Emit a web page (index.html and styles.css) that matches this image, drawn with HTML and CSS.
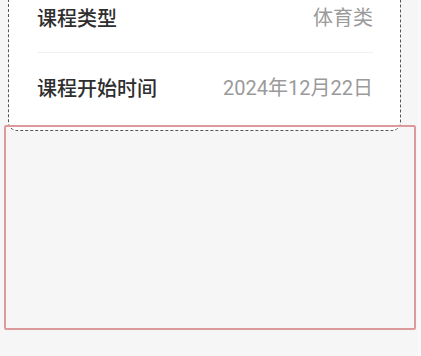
FILE: index.html
```html
<!DOCTYPE html>
<html lang="zh-CN">
<head>
<meta charset="utf-8">
<link rel="stylesheet" href="styles.css">
</head>
<body>
<div class="page">
  <div class="card">
    <div class="row">
      <span class="label">课程类型</span>
      <span class="value">体育类</span>
    </div>
    <div class="row">
      <span class="label">课程开始时间</span>
      <span class="value">2024年12月22日</span>
    </div>
  </div>
  <div class="empty-area"></div>
</div>
</body>
</html>
```
FILE: styles.css
```css
html, body {
  margin: 0;
  padding: 0;
  background: #fafafa;
  font-family: "Noto Sans CJK SC", "Noto Sans", sans-serif;
}
.page {
  width: 418px;
  height: 356px;
  overflow: hidden;
  background: #f6f6f6;
}
.card {
  margin: -18px 0 0 8px;
  width: 393px;
  box-sizing: border-box;
  background: #fff;
  border: 1px dashed #555;
  border-radius: 0 0 9px 9px;
  padding: 0 27px 8px 28px;
}
.row {
  height: 69px;
  display: flex;
  align-items: center;
  justify-content: space-between;
  font-size: 20px;
  line-height: 24px;
}
.row + .row {
  border-top: 1px solid #f1f1f1;
}
.label {
  color: #2e2e2e;
  font-weight: 500;
}
.value {
  color: #9a9a9a;
  font-family: "Roboto", "Noto Sans CJK SC", sans-serif;
}
.empty-area {
  margin: -6px 0 0 4px;
  width: 412px;
  height: 205px;
  box-sizing: border-box;
  border: 2px solid #dc9a9c;
  border-radius: 2px;
}
```
